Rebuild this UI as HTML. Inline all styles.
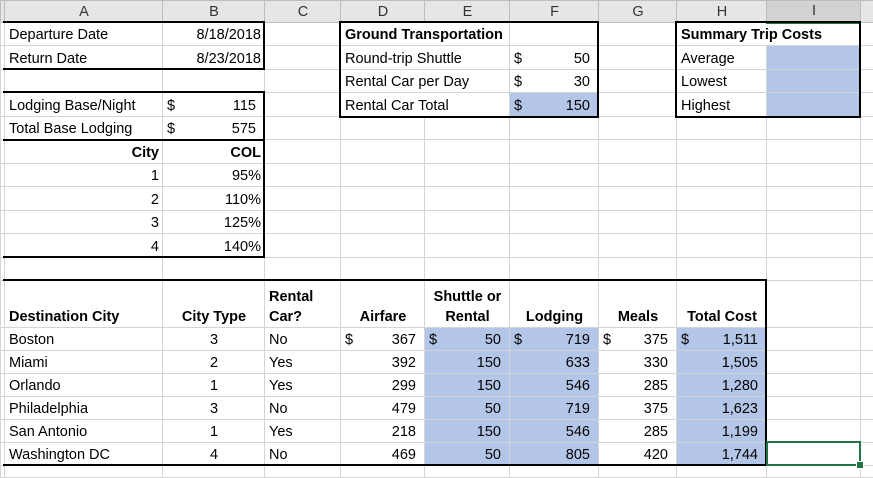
<!DOCTYPE html>
<html><head><meta charset="utf-8"><style>
body{margin:0;width:873px;height:474px;overflow:hidden;background:#fff;font-family:"Liberation Sans",sans-serif;font-size:14.5px;color:#000;position:relative}
table{border-collapse:collapse;table-layout:fixed;position:absolute;left:0;top:0;width:873px}
td{border:1px solid #d4d4d4;padding:0 3px 0 4px;white-space:nowrap;overflow:hidden;vertical-align:bottom;line-height:20px;box-sizing:border-box}
td.z{padding:0}
tr.h td{background:#e6e6e6;text-align:center;vertical-align:middle;color:#333;border-color:#bdbdbd;line-height:18px}
tr.h td.sel{background:#d2d2d2;border-bottom:2px solid #217346}
.r{text-align:right}.c{text-align:center}.b{font-weight:bold}
.n{text-align:right;padding-right:8px}
.bl{background:#b4c6e7}
.acc{display:flex;justify-content:space-between;padding-right:5px}
.box{position:absolute;border:2px solid #000;box-sizing:border-box;pointer-events:none}
</style></head><body>
<table>
<colgroup><col style="width:4px"><col style="width:158px"><col style="width:102px"><col style="width:76px"><col style="width:84px"><col style="width:85px"><col style="width:89px"><col style="width:78px"><col style="width:90px"><col style="width:94px"><col style="width:13px"></colgroup>
<tr class="h" style="height:22px"><td class="z"></td><td>A</td><td>B</td><td>C</td><td>D</td><td>E</td><td>F</td><td>G</td><td>H</td><td class="sel">I</td><td class="z"></td></tr>
<tr style="height:23px"><td class="z"></td><td>Departure Date</td><td class="r">8/18/2018</td><td></td><td class="b" colspan="2" style="overflow:visible">Ground Transportation</td><td></td><td></td><td class="b" colspan="2" style="overflow:visible">Summary Trip Costs</td><td class="z"></td></tr>
<tr style="height:24px"><td class="z"></td><td>Return Date</td><td class="r">8/23/2018</td><td></td><td colspan="2">Round-trip Shuttle</td><td><div class="acc"><span>$</span><span>50</span></div></td><td></td><td>Average</td><td class="bl"></td><td class="z"></td></tr>
<tr style="height:23px"><td class="z"></td><td></td><td></td><td></td><td colspan="2">Rental Car per Day</td><td><div class="acc"><span>$</span><span>30</span></div></td><td></td><td>Lowest</td><td class="bl"></td><td class="z"></td></tr>
<tr style="height:24px"><td class="z"></td><td>Lodging Base/Night</td><td><div class="acc"><span>$</span><span>115</span></div></td><td></td><td colspan="2">Rental Car Total</td><td class="bl"><div class="acc"><span>$</span><span>150</span></div></td><td></td><td>Highest</td><td class="bl"></td><td class="z"></td></tr>
<tr style="height:23px"><td class="z"></td><td>Total Base Lodging</td><td><div class="acc"><span>$</span><span>575</span></div></td><td></td><td></td><td></td><td></td><td></td><td></td><td></td><td class="z"></td></tr>
<tr style="height:24px"><td class="z"></td><td class="r b">City</td><td class="r b">COL</td><td></td><td></td><td></td><td></td><td></td><td></td><td></td><td class="z"></td></tr>
<tr style="height:23px"><td class="z"></td><td class="r">1</td><td class="r">95%</td><td></td><td></td><td></td><td></td><td></td><td></td><td></td><td class="z"></td></tr>
<tr style="height:24px"><td class="z"></td><td class="r">2</td><td class="r">110%</td><td></td><td></td><td></td><td></td><td></td><td></td><td></td><td class="z"></td></tr>
<tr style="height:23px"><td class="z"></td><td class="r">3</td><td class="r">125%</td><td></td><td></td><td></td><td></td><td></td><td></td><td></td><td class="z"></td></tr>
<tr style="height:24px"><td class="z"></td><td class="r">4</td><td class="r">140%</td><td></td><td></td><td></td><td></td><td></td><td></td><td></td><td class="z"></td></tr>
<tr style="height:23px"><td class="z"></td><td></td><td></td><td></td><td></td><td></td><td></td><td></td><td></td><td></td><td class="z"></td></tr>
<tr style="height:47px" class="b"><td class="z"></td><td>Destination City</td><td class="c">City Type</td><td>Rental<br>Car?</td><td class="c">Airfare</td><td class="c">Shuttle or<br>Rental</td><td class="c">Lodging</td><td class="c">Meals</td><td class="c">Total Cost</td><td></td><td class="z"></td></tr>
<tr style="height:23px"><td class="z"></td><td>Boston</td><td class="c">3</td><td>No</td><td><div class="acc"><span>$</span><span>367</span></div></td><td class="bl"><div class="acc"><span>$</span><span>50</span></div></td><td class="bl"><div class="acc"><span>$</span><span>719</span></div></td><td><div class="acc"><span>$</span><span>375</span></div></td><td class="bl"><div class="acc"><span>$</span><span>1,511</span></div></td><td></td><td class="z"></td></tr>
<tr style="height:23px"><td class="z"></td><td>Miami</td><td class="c">2</td><td>Yes</td><td class="n">392</td><td class="bl n">150</td><td class="bl n">633</td><td class="n">330</td><td class="bl n">1,505</td><td></td><td class="z"></td></tr>
<tr style="height:23px"><td class="z"></td><td>Orlando</td><td class="c">1</td><td>Yes</td><td class="n">299</td><td class="bl n">150</td><td class="bl n">546</td><td class="n">285</td><td class="bl n">1,280</td><td></td><td class="z"></td></tr>
<tr style="height:23px"><td class="z"></td><td>Philadelphia</td><td class="c">3</td><td>No</td><td class="n">479</td><td class="bl n">50</td><td class="bl n">719</td><td class="n">375</td><td class="bl n">1,623</td><td></td><td class="z"></td></tr>
<tr style="height:23px"><td class="z"></td><td>San Antonio</td><td class="c">1</td><td>Yes</td><td class="n">218</td><td class="bl n">150</td><td class="bl n">546</td><td class="n">285</td><td class="bl n">1,199</td><td></td><td class="z"></td></tr>
<tr style="height:23px"><td class="z"></td><td>Washington DC</td><td class="c">4</td><td>No</td><td class="n">469</td><td class="bl n">50</td><td class="bl n">805</td><td class="n">420</td><td class="bl n">1,744</td><td></td><td class="z"></td></tr>
<tr style="height:12px"><td class="z"></td><td></td><td></td><td></td><td></td><td></td><td></td><td></td><td></td><td></td><td class="z"></td></tr>
</table>
<div class="box" style="left:3px;top:21px;width:262px;height:49px;border-left:none"></div>
<div class="box" style="left:3px;top:91px;width:262px;height:50px;border-left:none"></div>
<div class="box" style="left:3px;top:139px;width:262px;height:119px;border-left:none;border-top:none"></div>
<div class="box" style="left:339px;top:21px;width:260px;height:97px"></div>
<div class="box" style="left:675px;top:21px;width:186px;height:97px"></div>
<div class="box" style="left:3px;top:279px;width:764px;height:187px;border-left:none"></div>
<div class="box" style="left:766px;top:441px;width:95px;height:25px;border-color:#217346"></div>
<div style="position:absolute;left:856px;top:461px;width:6px;height:6px;background:#217346;border:1px solid #fff"></div>
</body></html>
